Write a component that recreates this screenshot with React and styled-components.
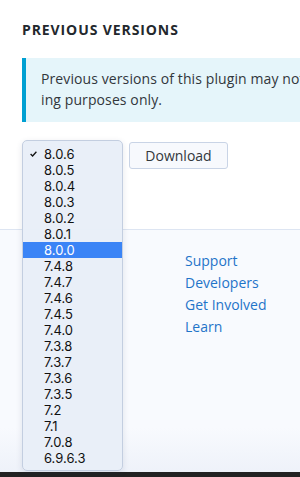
import styled, { createGlobalStyle } from 'styled-components';

const GlobalStyle = createGlobalStyle`
  html, body {
    margin: 0;
    padding: 0;
    overflow: hidden;
    background: #fff;
  }
  body {
    font-family: "Open Sans", "Liberation Sans", sans-serif;
  }
`;

const Page = styled.div`
  width: 300px;
  height: 477px;
  display: flex;
  flex-direction: column;
  overflow: hidden;
`;

const Section = styled.section`
  padding: 20px 0 0 22px;
`;

const Heading = styled.h2`
  margin: 0;
  font-size: 14px;
  line-height: 20px;
  font-weight: 700;
  letter-spacing: 0.9px;
  text-transform: uppercase;
  color: #23282d;
`;

const Notice = styled.div`
  margin-top: 18px;
  width: 259px;
  padding: 10px 0 12px 15px;
  background: #e5f5fa;
  border-left: 4px solid #00a0d2;
  font-size: 14px;
  line-height: 21px;
  letter-spacing: 0.1px;
  color: #32373c;
  white-space: nowrap;
  overflow: hidden;
`;

const Controls = styled.div`
  margin-top: 19px;
  display: flex;
  align-items: flex-start;
  gap: 6px;
  height: 28px;
`;

const SelectWrap = styled.div`
  position: relative;
  width: 101px;
  height: 28px;
`;

const Menu = styled.ul`
  position: absolute;
  top: -1px;
  left: 0;
  width: 101px;
  margin: 0;
  padding: 5px 0 4px;
  list-style: none;
  box-sizing: border-box;
  background: rgba(232, 238, 248, 0.97);
  border: 1px solid #c3cee0;
  border-radius: 5px;
  box-shadow: 0 2px 6px rgba(40, 60, 100, 0.12);
  z-index: 5;
  font-family: Inter, Roboto, "Liberation Sans", sans-serif;
`;

const Option = styled.li`
  position: relative;
  height: 16px;
  line-height: 16px;
  padding-left: 21px;
  font-size: 13px;
  color: ${(p) => (p.$active ? '#fff' : '#111')};
  background: ${(p) => (p.$active ? '#3a84f6' : 'transparent')};
`;

const Check = styled.svg`
  position: absolute;
  left: 7px;
  top: 5px;
`;

const Button = styled.button`
  margin-top: 1px;
  width: 99px;
  height: 27px;
  box-sizing: border-box;
  padding: 0;
  background: #f7f9fd;
  border: 1px solid #c9d4e6;
  border-radius: 3px;
  font-family: "Open Sans", "Liberation Sans", sans-serif;
  font-size: 14px;
  color: #32373c;
`;

const Footer = styled.footer`
  margin-top: 60px;
  flex: 1;
  display: flex;
  flex-direction: column;
  border-top: 1px solid #dde5f2;
  background: linear-gradient(to bottom, #f8fafe 0%, #f8fafe 80%, #edf1f9 100%);
`;

const Links = styled.ul`
  margin: 0;
  padding: 20px 0 0 185px;
  list-style: none;
  flex: 1;
`;

const LinkItem = styled.li`
  font-size: 14px;
  line-height: 22px;
  color: #1f74c9;
`;

const BottomBar = styled.div`
  height: 5px;
  background: #222;
`;

const versions = [
  '8.0.6', '8.0.5', '8.0.4', '8.0.3', '8.0.2', '8.0.1', '8.0.0',
  '7.4.8', '7.4.7', '7.4.6', '7.4.5', '7.4.0', '7.3.8', '7.3.7',
  '7.3.6', '7.3.5', '7.2', '7.1', '7.0.8', '6.9.6.3',
];

export default function App() {
  return (
    <Page>
      <GlobalStyle />
      <Section>
        <Heading>Previous Versions</Heading>
        <Notice>
          Previous versions of this plugin may not be secure or stable. They are available for test-
          <br />
          ing purposes only.
        </Notice>
        <Controls>
          <SelectWrap>
            <Menu>
              {versions.map((v, i) => (
                <Option key={v} $active={v === '8.0.0'}>
                  {i === 0 && (
                    <Check width="7" height="6" viewBox="0 0 7 6">
                      <polyline points="0.6,3 2.6,5 6.4,0.8" fill="none" stroke="#111" strokeWidth="1.3" />
                    </Check>
                  )}
                  {v}
                </Option>
              ))}
            </Menu>
          </SelectWrap>
          <Button>Download</Button>
        </Controls>
      </Section>
      <Footer>
        <Links>
          <LinkItem>Support</LinkItem>
          <LinkItem>Developers</LinkItem>
          <LinkItem>Get Involved</LinkItem>
          <LinkItem>Learn</LinkItem>
        </Links>
        <BottomBar />
      </Footer>
    </Page>
  );
}
